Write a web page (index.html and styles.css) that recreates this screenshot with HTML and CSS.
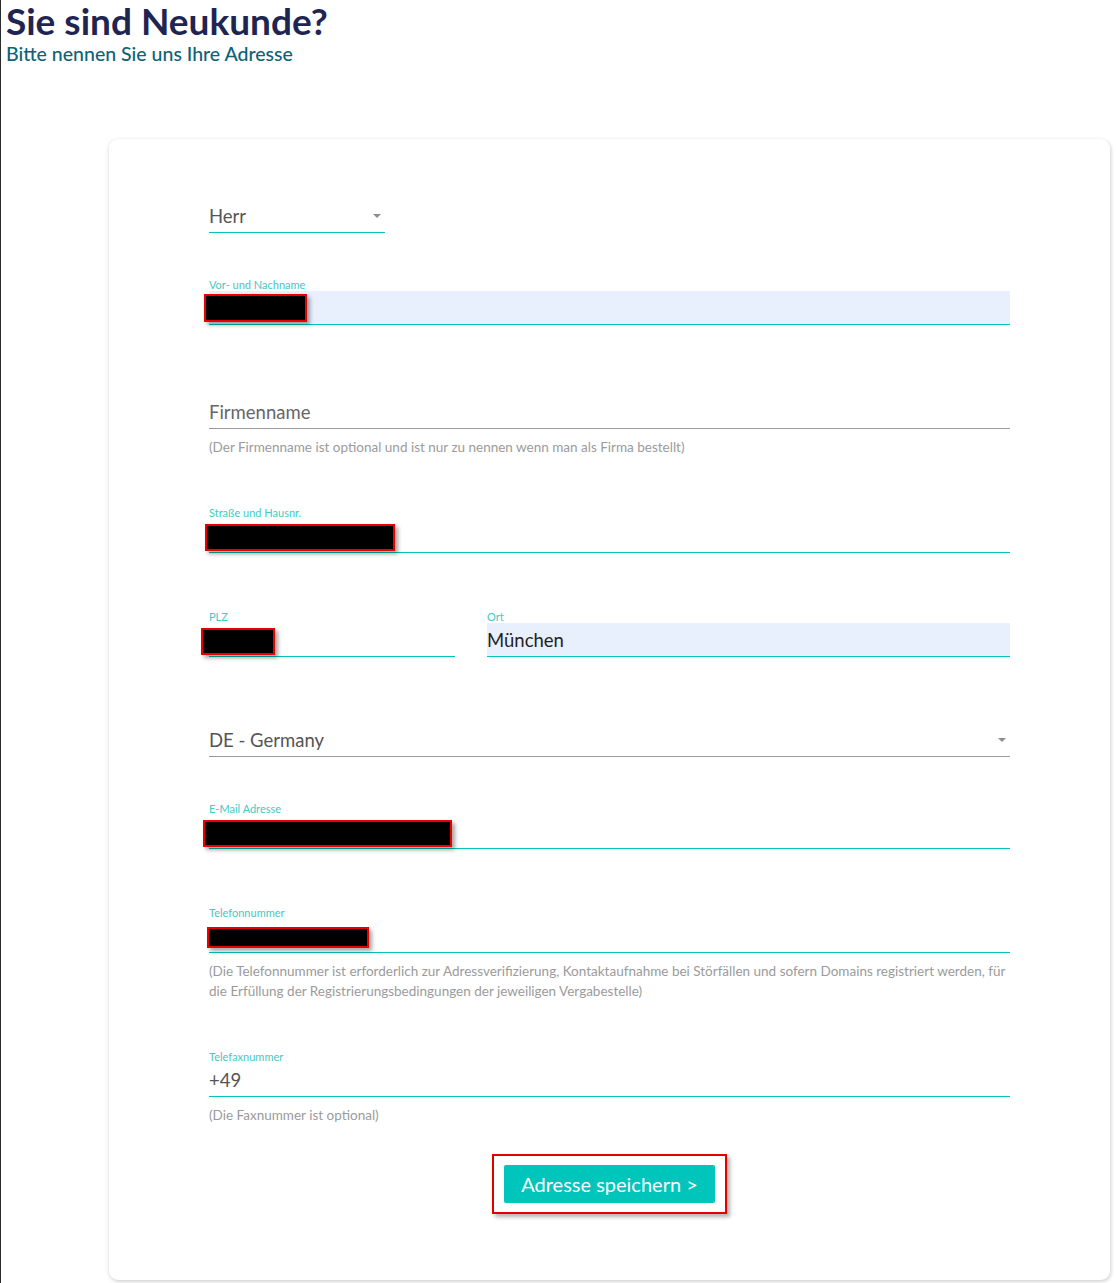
FILE: index.html
```html
<!DOCTYPE html>
<html lang="de">
<head>
<meta charset="utf-8">
<title>Sie sind Neukunde?</title>
<link rel="stylesheet" href="styles.css">
</head>
<body>
<div class="page">
  <h1 class="title">Sie sind Neukunde?</h1>
  <p class="subtitle">Bitte nennen Sie uns Ihre Adresse</p>

  <div class="card">
    <div class="field field-salutation">
      <div class="input select">
        <span class="value">Herr</span>
        <span class="caret"></span>
      </div>
    </div>

    <div class="field">
      <div class="label">Vor- und Nachname</div>
      <div class="input active autofill">
        <span class="redact redact-name"></span>
      </div>
    </div>

    <div class="field field-helped">
      <div class="label"></div>
      <div class="input plain">
        <span class="placeholder">Firmenname</span>
      </div>
      <p class="help">(Der Firmenname ist optional und ist nur zu nennen wenn man als Firma bestellt)</p>
    </div>

    <div class="field">
      <div class="label">Straße und Hausnr.</div>
      <div class="input active">
        <span class="redact redact-street"></span>
      </div>
    </div>

    <div class="field row">
      <div class="col col-plz">
        <div class="label">PLZ</div>
        <div class="input active">
          <span class="redact redact-plz"></span>
        </div>
      </div>
      <div class="col col-ort">
        <div class="label">Ort</div>
        <div class="input active autofill">
          <span class="value dark">München</span>
        </div>
      </div>
    </div>

    <div class="field field-country">
      <div class="label"></div>
      <div class="input plain select">
        <span class="value">DE - Germany</span>
        <span class="caret"></span>
      </div>
    </div>

    <div class="field">
      <div class="label">E-Mail Adresse</div>
      <div class="input active">
        <span class="redact redact-mail"></span>
      </div>
    </div>

    <div class="field field-helped">
      <div class="label">Telefonnummer</div>
      <div class="input active">
        <span class="redact redact-tel"></span>
      </div>
      <p class="help help-narrow">(Die Telefonnummer ist erforderlich zur Adressverifizierung, Kontaktaufnahme bei Störfällen und sofern Domains registriert werden, für die Erfüllung der Registrierungsbedingungen der jeweiligen Vergabestelle)</p>
    </div>

    <div class="field field-last">
      <div class="label">Telefaxnummer</div>
      <div class="input active">
        <span class="value">+49</span>
      </div>
      <p class="help">(Die Faxnummer ist optional)</p>
    </div>

    <div class="actions">
      <div class="highlight">
        <button class="btn" type="button">Adresse speichern &gt;</button>
      </div>
    </div>
  </div>
</div>
</body>
</html>
```

FILE: styles.css
```css
html, body {
  margin: 0;
  padding: 0;
  background: #ffffff;
}

body {
  font-family: Lato, "Open Sans", "Liberation Sans", sans-serif;
}

.page {
  border-left: 1px solid #2b2b2b;
  padding-left: 5px;
  min-height: 1283px;
  box-sizing: border-box;
}

.title {
  margin: 0;
  font-size: 37px;
  line-height: 42px;
  font-weight: 700;
  color: #1f2552;
}

.subtitle {
  margin: 0;
  font-size: 19.5px;
  line-height: 24px;
  color: #0d6275;
  font-weight: 500;
}

.card {
  margin-top: 73px;
  margin-left: 103px;
  width: 1001px;
  box-sizing: border-box;
  padding: 60px 100px 66px;
  background: #ffffff;
  border-radius: 9px;
  box-shadow: 0 1px 4px rgba(0, 0, 0, 0.16), 2px 2px 3px rgba(0, 0, 0, 0.06);
}

.field {
  margin-bottom: 58px;
}

.field-salutation {
  width: 176px;
  margin-bottom: 46px;
}

.field-helped {
  margin-bottom: 50px;
}

.field-country {
  margin-bottom: 46px;
}

.field-last {
  margin-bottom: 29px;
}

.row {
  display: flex;
  gap: 32px;
  margin-bottom: 54px;
}

.col-plz {
  width: 246px;
}

.col-ort {
  flex: 1;
}

.label {
  height: 12px;
  font-size: 11px;
  line-height: 12px;
  color: #45c9c2;
  white-space: nowrap;
}

.input {
  height: 33px;
  border-bottom: 1px solid #00c4b6;
  display: flex;
  align-items: center;
  position: relative;
  font-size: 18.5px;
  color: #555555;
}

.input.plain {
  border-bottom-color: #9a9a9a;
}

.input.autofill {
  background: #e8f0fe;
}

.value {
  line-height: 22px;
  padding-top: 1px;
}

.value.dark {
  color: #222222;
}

.placeholder {
  line-height: 22px;
  padding-top: 1px;
  color: #666666;
}

.select {
  justify-content: space-between;
}

.caret {
  width: 0;
  height: 0;
  border-left: 4px solid transparent;
  border-right: 4px solid transparent;
  border-top: 4px solid #8d8d8d;
  margin-right: 4px;
  margin-top: 1px;
}

.help {
  margin: 8px 0 0;
  font-size: 13.5px;
  line-height: 20px;
  color: #9b9b9b;
}

.help-narrow {
  font-size: 13.5px;
}

.redact {
  display: block;
  background: #000000;
  border: 2px solid #e80000;
  box-sizing: border-box;
  box-shadow: 3px 3px 4px rgba(0, 0, 0, 0.35);
}

.redact-name {
  width: 103px;
  height: 28px;
  margin-left: -5px;
}

.redact-street {
  width: 190px;
  height: 27px;
  margin-left: -4px;
  margin-top: 4px;
}

.redact-plz {
  width: 74px;
  height: 27px;
  margin-left: -8px;
  margin-top: 3px;
}

.redact-mail {
  width: 249px;
  height: 27px;
  margin-left: -6px;
  margin-top: 3px;
}

.redact-tel {
  width: 162px;
  height: 21px;
  margin-left: -2px;
  margin-top: 3px;
}

.actions {
  display: flex;
  justify-content: center;
}

.highlight {
  border: 2px solid #e50000;
  padding: 9px 10px;
  box-shadow: 3px 3px 4px rgba(0, 0, 0, 0.3);
}

.btn {
  display: block;
  width: 211px;
  height: 38px;
  border: none;
  border-radius: 2px;
  background: #00c5ba;
  color: #ffffff;
  font-family: Lato, "Open Sans", "Liberation Sans", sans-serif;
  font-size: 20px;
  padding: 0;
  cursor: pointer;
}
```
